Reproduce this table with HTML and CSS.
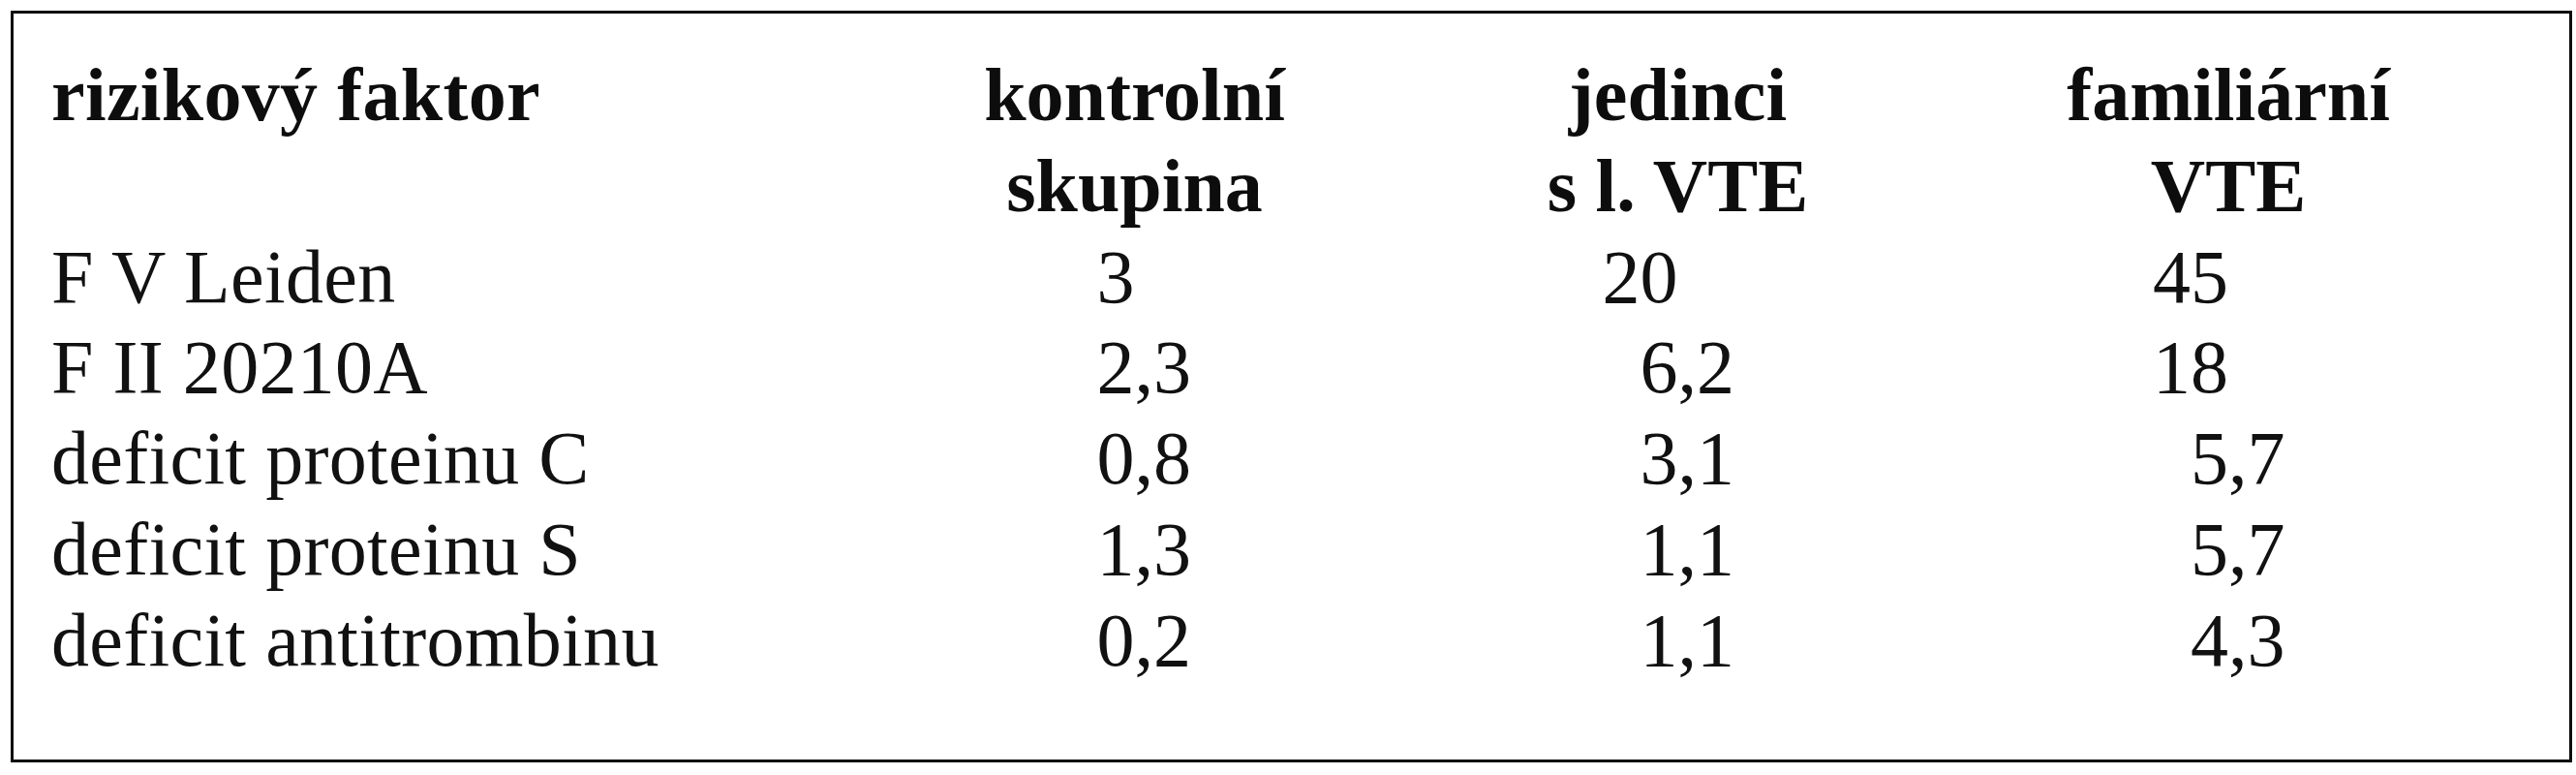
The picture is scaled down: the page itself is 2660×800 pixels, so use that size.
FILE: index.html
```html
<!DOCTYPE html>
<html lang="cs">
<head>
<meta charset="utf-8">
<title>Rizikové faktory VTE</title>
<link rel="stylesheet" href="styles.css">
</head>
<body>
<div class="frame">
  <div class="table">
    <div class="cell head label">rizikový faktor</div>
    <div class="cell head col">kontrolní<br>skupina</div>
    <div class="cell head col">jedinci<br>s l. VTE</div>
    <div class="cell head col">familiární<br>VTE</div>

    <div class="cell label">F V Leiden</div>
    <div class="cell num"><span class="int">3</span><span class="frac"></span></div>
    <div class="cell num"><span class="int">20</span><span class="frac"></span></div>
    <div class="cell num"><span class="int">45</span><span class="frac"></span></div>

    <div class="cell label">F II 20210A</div>
    <div class="cell num"><span class="int">2</span><span class="frac">,3</span></div>
    <div class="cell num"><span class="int">6</span><span class="frac">,2</span></div>
    <div class="cell num"><span class="int">18</span><span class="frac"></span></div>

    <div class="cell label">deficit proteinu C</div>
    <div class="cell num"><span class="int">0</span><span class="frac">,8</span></div>
    <div class="cell num"><span class="int">3</span><span class="frac">,1</span></div>
    <div class="cell num"><span class="int">5</span><span class="frac">,7</span></div>

    <div class="cell label">deficit proteinu S</div>
    <div class="cell num"><span class="int">1</span><span class="frac">,3</span></div>
    <div class="cell num"><span class="int">1</span><span class="frac">,1</span></div>
    <div class="cell num"><span class="int">5</span><span class="frac">,7</span></div>

    <div class="cell label">deficit antitrombinu</div>
    <div class="cell num"><span class="int">0</span><span class="frac">,2</span></div>
    <div class="cell num"><span class="int">1</span><span class="frac">,1</span></div>
    <div class="cell num"><span class="int">4</span><span class="frac">,3</span></div>
  </div>
</div>
</body>
</html>
```

FILE: styles.css
```css
html, body {
  margin: 0;
  padding: 0;
  background: #ffffff;
}

body {
  width: 2660px;
  height: 800px;
  font-family: "Liberation Serif", "DejaVu Serif", serif;
  color: #111111;
}

.frame {
  margin: 11px 4px 0 11px;
  border: 3px solid #0d0d0d;
  padding: 37px 0 76px 39px;
}

.table {
  display: grid;
  grid-template-columns: 838px 561px 561px 576px;
  font-size: 78px;
  line-height: 93.8px;
}

.cell {
  white-space: nowrap;
}

.label {
  letter-spacing: 0.3px;
}

.head {
  font-weight: bold;
  color: #0d0d0d;
}

.col {
  text-align: center;
}

.num {
  display: flex;
}

.num .int {
  flex: 1;
  text-align: right;
}

.num .frac {
  flex: 1;
  text-align: left;
}
```
